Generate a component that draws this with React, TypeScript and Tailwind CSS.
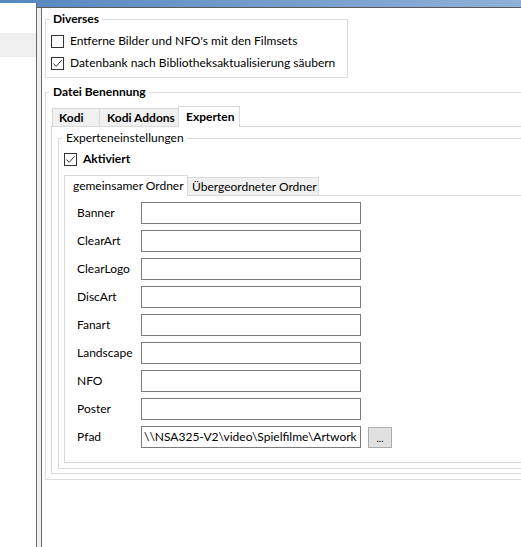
import type { ReactNode } from 'react'

function Check({ checked }: { checked?: boolean }) {
  return (
    <span className="flex h-[13px] w-[13px] shrink-0 items-center justify-center border border-[#333333] bg-white">
      {checked && (
        <svg width="11" height="11" viewBox="0 0 11 11">
          <path d="M1.5 5.5 L4.2 8.4 L9.6 2.2" fill="none" stroke="#333333" strokeWidth="1" />
        </svg>
      )}
    </span>
  )
}

function Group({
  title,
  bold,
  className,
  children,
}: {
  title: string
  bold?: boolean
  className: string
  children: ReactNode
}) {
  return (
    <fieldset className={`border border-[#dcdcdc] ${className}`}>
      <legend className={`ml-[3px] pl-1 pr-[3px] leading-4 ${bold ? 'font-bold' : ''}`}>{title}</legend>
      {children}
    </fieldset>
  )
}

const fields = ['Banner', 'ClearArt', 'ClearLogo', 'DiscArt', 'Fanart', 'Landscape', 'NFO', 'Poster']

export default function App() {
  return (
    <div className="flex h-[547px] w-[521px] flex-col overflow-hidden whitespace-nowrap bg-white text-[12px] text-black [font-family:Lato,sans-serif]">
      <div className="h-[3px] shrink-0 bg-gradient-to-r from-[#5687c0] to-[#8fb1d8]" />
      <div className="flex min-h-0 flex-1">
        {/* left list */}
        <div className="w-[37px] shrink-0 border-r border-[#6a6a6a] bg-white">
          <div className="mt-[30px] h-[24px] bg-[#f0f0f0]" />
        </div>
        <div className="flex min-w-0 flex-1 flex-col">
          <div className="h-[4px] shrink-0 bg-gradient-to-r from-[#5a8ac2] to-[#8fb1d8]" />
          <div className="h-px shrink-0 bg-[#5a5a5a]" />
          <div className="flex min-h-0 flex-1">
            <div className="w-[5px] shrink-0 border-r border-[#6a6a6a] bg-[#f0f0f0]" />
            <div className="min-w-0 flex-1 overflow-hidden bg-white">
              <Group title="Diverses" bold className="ml-[3px] mt-[3px] w-[303px] pb-[3px] pt-[3px]">
                <label className="flex h-[22px] items-center gap-[6px] pl-[5px]">
                  <Check />
                  <span>Entferne Bilder und NFO's mit den Filmsets</span>
                </label>
                <label className="flex h-[22px] items-center gap-[6px] pl-[5px]">
                  <Check checked />
                  <span>Datenbank nach Bibliotheksaktualisierung säubern</span>
                </label>
              </Group>

              <Group title="Datei Benennung" bold className="ml-[3px] mt-[6px] w-[640px] pb-[5px]">
                <div className="ml-[5px] pt-[6px]">
                  <div className="flex h-[20px] items-end pl-[1px]">
                    <div className="flex h-[18px] w-[48px] items-center border-x border-t border-[#d9d9d9] bg-[#f0f0f0] pl-[6px] font-bold">
                      Kodi
                    </div>
                    <div className="flex h-[18px] w-[78px] items-center border-t border-[#d9d9d9] bg-[#f0f0f0] pl-[7px] font-bold">
                      Kodi Addons
                    </div>
                    <div className="relative z-10 -mb-px flex h-[21px] w-[62px] items-center border-x border-t border-[#d9d9d9] bg-white pl-[7px] font-bold">
                      Experten
                    </div>
                  </div>
                  <div className="border border-[#d9d9d9] pb-[4px]">
                    <Group title="Experteneinstellungen" className="ml-[6px] mt-[3px] pb-[5px]">
                      <label className="ml-[5px] mt-[4px] flex h-[18px] items-center gap-[6px]">
                        <Check checked />
                        <span className="font-bold">Aktiviert</span>
                      </label>
                      <div className="ml-[5px] mt-[7px]">
                        <div className="flex h-[20px] items-end">
                          <div className="relative z-10 -mb-px flex h-[21px] w-[124px] items-center border-x border-t border-[#d9d9d9] bg-white pl-[8px]">
                            gemeinsamer Ordner
                          </div>
                          <div className="flex h-[18px] w-[131px] items-center border-r border-t border-[#d9d9d9] bg-[#f0f0f0] pl-[4px]">
                            Übergeordneter Ordner
                          </div>
                        </div>
                        <div className="flex flex-col gap-[6px] border border-[#d9d9d9] pb-[14px] pl-[12px] pt-[6px]">
                          {fields.map((f) => (
                            <div key={f} className="flex h-[22px] items-center">
                              <span className="w-[64px] shrink-0">{f}</span>
                              <div className="h-[22px] w-[220px] shrink-0 border border-[#7a7a7a] bg-white" />
                            </div>
                          ))}
                          <div className="flex h-[22px] items-center">
                            <span className="w-[64px] shrink-0">Pfad</span>
                            <div className="flex h-[22px] w-[220px] shrink-0 items-center overflow-hidden border border-[#7a7a7a] bg-white pl-[2px]">
                              {'\\\\NSA325-V2\\video\\Spielfilme\\Artwork'}
                            </div>
                            <button
                              type="button"
                              className="ml-[7px] mt-px flex h-[21px] w-[24px] items-end justify-center border border-[#adadad] bg-[#e1e1e1] pb-[4px] text-[10px] leading-none"
                            >
                              ...
                            </button>
                          </div>
                        </div>
                      </div>
                    </Group>
                  </div>
                </div>
              </Group>
            </div>
          </div>
        </div>
      </div>
    </div>
  )
}
